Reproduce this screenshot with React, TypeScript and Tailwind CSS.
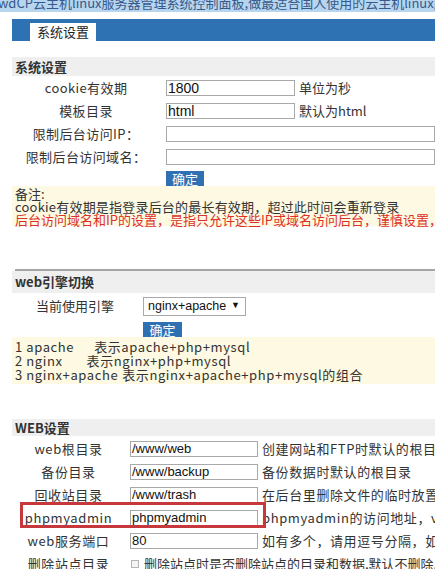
import type { ReactNode } from 'react'

const CJK = "font-['Noto_Sans_CJK_SC','Noto_Sans',sans-serif]"
const LATIN = "font-['Liberation_Sans',Arial,sans-serif]"

interface FieldProps {
  value?: string
  className?: string
}

function Field({ value = '', className = '' }: FieldProps) {
  return (
    <div
      className={`h-[16px] shrink-0 overflow-hidden whitespace-nowrap border border-[#a9a9a9] bg-white px-[1px] text-[#111] leading-[14px] ${LATIN} ${className}`}
    >
      {value}
    </div>
  )
}

function SectionHeader({ children, className = '' }: { children: ReactNode; className?: string }) {
  return (
    <div className={`flex items-center bg-[#efefef] pl-[3px] text-[13px] font-bold text-[#333] ${className}`}>
      {children}
    </div>
  )
}

interface SysRowProps {
  label: string
  value?: string
  note?: string
  wide?: boolean
}

function SysRow({ label, value, note, wide }: SysRowProps) {
  return (
    <div className="flex h-[23px] items-center">
      <div className="w-[148px] shrink-0 text-center tracking-[0.4px] text-[#333]">{label}</div>
      <div className="ml-[6px] flex flex-1 items-center">
        <Field value={value} className={wide ? 'flex-1 text-[14px]' : 'w-[129px] text-[14px]'} />
        {note && <span className="ml-[4px] whitespace-nowrap text-[#333]">{note}</span>}
      </div>
    </div>
  )
}

interface WebRowProps {
  label: string
  value: string
  note: ReactNode
  highlight?: boolean
}

function WebRow({ label, value, note, highlight }: WebRowProps) {
  return (
    <div className="relative flex h-[23px] items-center">
      <div className="w-[113px] shrink-0 text-center tracking-[0.6px] text-[#333]">{label}</div>
      <Field value={value} className="ml-[5px] w-[128px] text-[13px]" />
      <span className="ml-[4px] whitespace-nowrap tracking-[0.6px] text-[#333]">{note}</span>
      {highlight && (
        <div className="absolute left-[8px] top-[-4px] h-[26px] w-[246px] border-[3px] border-[#c6383b]" />
      )}
    </div>
  )
}

function OkButton({ className = '' }: { className?: string }) {
  return (
    <div
      className={`h-[15px] bg-[#2f70b3] text-center text-[13px] leading-[15px] text-white ${className}`}
    >
      确定
    </div>
  )
}

export default function App() {
  return (
    <div className={`h-[569px] w-[435px] overflow-hidden bg-white text-[13px] ${CJK}`}>
      {/* page title strip */}
      <div className="h-[12px] overflow-hidden bg-[#b7d5ef]">
        <div className="-ml-[2px] -mt-[5px] whitespace-nowrap text-[13px] leading-[16px] text-[#36598a]">
          wdCP云主机linux服务器管理系统控制面板,做最适合国人使用的云主机linux服务器管理面板
        </div>
      </div>

      <div className="ml-[12px]">
        {/* tab bar */}
        <div className="mt-[7px] flex h-[22px] items-end bg-[#2e72b4] pl-[18px]">
          <div className="flex h-[18px] w-[66px] items-center justify-center bg-white text-[13px] text-[#222]">
            系统设置
          </div>
        </div>

        {/* 系统设置 */}
        <SectionHeader className="mt-[16px] h-[19px]">系统设置</SectionHeader>
        <SysRow label="cookie有效期" value="1800" note="单位为秒" />
        <SysRow label="模板目录" value="html" note="默认为html" />
        <SysRow label="限制后台访问IP：" wide />
        <SysRow label="限制后台访问域名：" wide />
        <OkButton className="ml-[154px] mt-[3px] w-[38px]" />
        <div className="h-[40px] whitespace-nowrap bg-[#fdf9e2] pl-[3px] pt-[1px] leading-[13px]">
          <div className="text-[#333]">备注:</div>
          <div className="tracking-[0.2px] text-[#333]">cookie有效期是指登录后台的最长有效期，超过此时间会重新登录</div>
          <div className="text-[#dc3128]">
            后台访问域名和IP的设置，是指只允许这些IP或域名访问后台，谨慎设置，否则可能无法登录
          </div>
        </div>

        {/* web引擎切换 */}
        <div className="mt-[43px] ml-[3px] h-[2px] bg-[#a6a6a6]" />
        <SectionHeader className="h-[22px]">web引擎切换</SectionHeader>
        <div className="flex h-[26px] items-center">
          <div className="w-[126px] shrink-0 text-center text-[#333]">当前使用引擎</div>
          <div
            className={`ml-[5px] flex h-[19px] w-[103px] items-center justify-between border border-[#a9a9a9] bg-white pl-[4px] pr-[5px] text-[12.5px] text-[#111] ${LATIN}`}
          >
            <span>nginx+apache</span>
            <span className="text-[9px]">▼</span>
          </div>
        </div>
        <OkButton className="ml-[131px] mt-[3px] w-[39px]" />
        <div className="h-[47px] whitespace-nowrap bg-[#fdf9e2] pl-[3px] pt-[3px] leading-[14px] tracking-[0.6px] text-[#333]">
          <div>
            1 apache<span className="ml-[20px]">表示apache+php+mysql</span>
          </div>
          <div>
            2 nginx<span className="ml-[24px]">表示nginx+php+mysql</span>
          </div>
          <div>
            3 nginx+apache<span className="ml-[4px]">表示nginx+apache+php+mysql的组合</span>
          </div>
        </div>

        {/* WEB设置 */}
        <SectionHeader className="mt-[35px] h-[17px]">WEB设置</SectionHeader>
        <div className="mt-[1px]">
          <WebRow label="web根目录" value="/www/web" note="创建网站和FTP时默认的根目录" />
          <WebRow label="备份目录" value="/www/backup" note="备份数据时默认的根目录" />
          <WebRow label="回收站目录" value="/www/trash" note="在后台里删除文件的临时放置根目录" />
          <WebRow label="phpmyadmin" value="phpmyadmin" note="phpmyadmin的访问地址，v3.0以上" highlight />
          <WebRow
            label="web服务端口"
            value="80"
            note={
              <>
                如有多个，请用逗号分隔，如"<span className="text-[#ee9a1f]">80,8080"</span>
              </>
            }
          />
          <div className="flex h-[23px] items-center">
            <div className="w-[113px] shrink-0 text-center tracking-[0.6px] text-[#333]">删除站点目录</div>
            <div className="ml-[6px] h-[8px] w-[8px] shrink-0 border border-[#b5b5b5] bg-[#f4f4f4]" />
            <span className="ml-[5px] whitespace-nowrap text-[#333]">
              删除站点时是否删除站点的目录和数据,默认不删除,<span className="text-[#dc3128]">允许删除</span>
            </span>
          </div>
        </div>
      </div>
    </div>
  )
}
